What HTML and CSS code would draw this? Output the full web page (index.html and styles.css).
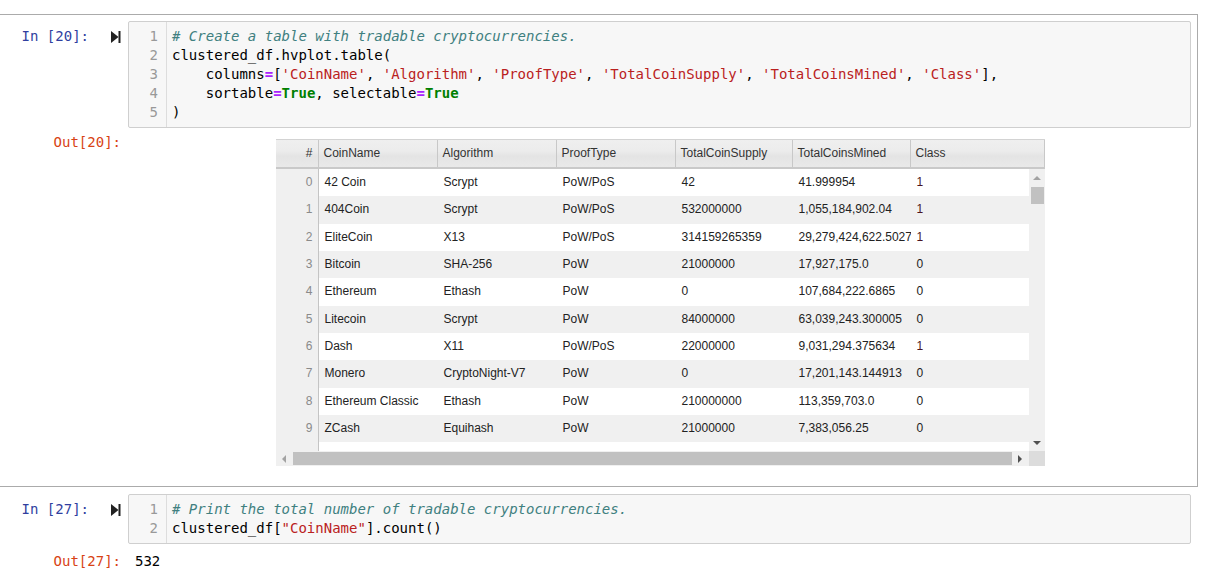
FILE: index.html
```html
<!DOCTYPE html>
<html>
<head>
<meta charset="utf-8">
<link rel="stylesheet" href="styles.css">
</head>
<body>
<div class="notebook">
  <div class="cell selected">
    <div class="input">
      <div class="prompt in-prompt"><span>In&nbsp;[20]:</span>
        <svg class="run" width="10" height="12" viewBox="0 0 10 12"><polygon points="0,0 7.5,6 0,12" fill="#222"/><rect x="7.5" y="0" width="2" height="12" fill="#222"/></svg>
      </div>
      <div class="code">
        <div class="gutter"><div>1</div><div>2</div><div>3</div><div>4</div><div>5</div></div>
        <div class="lines">
          <div class="ln"><span class="c"># Create a table with tradable cryptocurrencies.</span></div>
          <div class="ln">clustered_df.hvplot.table(</div>
          <div class="ln">    columns<span class="o">=</span>[<span class="s">'CoinName'</span>, <span class="s">'Algorithm'</span>, <span class="s">'ProofType'</span>, <span class="s">'TotalCoinSupply'</span>, <span class="s">'TotalCoinsMined'</span>, <span class="s">'Class'</span>],</div>
          <div class="ln">    sortable<span class="o">=</span><span class="k">True</span>, selectable<span class="o">=</span><span class="k">True</span></div>
          <div class="ln">)</div>
        </div>
      </div>
    </div>
    <div class="output output-table">
      <div class="prompt out-prompt">Out[20]:</div>
      <div class="out-area">
        <div class="grid">
          <div class="grid-header">
            <div class="hc idx">#</div>
            <div class="hc c1">CoinName</div>
            <div class="hc c2">Algorithm</div>
            <div class="hc c3">ProofType</div>
            <div class="hc c4">TotalCoinSupply</div>
            <div class="hc c5">TotalCoinsMined</div>
            <div class="hc c6 last">Class</div>
          </div>
          <div class="grid-body">
            <div class="viewport">
              <div class="row"><div class="dc idx">0</div><div class="dc c1">42 Coin</div><div class="dc c2">Scrypt</div><div class="dc c3">PoW/PoS</div><div class="dc c4">42</div><div class="dc c5">41.999954</div><div class="dc c6 one">1</div></div>
              <div class="row"><div class="dc idx">1</div><div class="dc c1">404Coin</div><div class="dc c2">Scrypt</div><div class="dc c3">PoW/PoS</div><div class="dc c4">532000000</div><div class="dc c5">1,055,184,902.04</div><div class="dc c6 one">1</div></div>
              <div class="row"><div class="dc idx">2</div><div class="dc c1">EliteCoin</div><div class="dc c2">X13</div><div class="dc c3">PoW/PoS</div><div class="dc c4">314159265359</div><div class="dc c5">29,279,424,622.502718</div><div class="dc c6 one">1</div></div>
              <div class="row"><div class="dc idx">3</div><div class="dc c1">Bitcoin</div><div class="dc c2">SHA-256</div><div class="dc c3">PoW</div><div class="dc c4">21000000</div><div class="dc c5">17,927,175.0</div><div class="dc c6">0</div></div>
              <div class="row"><div class="dc idx">4</div><div class="dc c1">Ethereum</div><div class="dc c2">Ethash</div><div class="dc c3">PoW</div><div class="dc c4">0</div><div class="dc c5">107,684,222.6865</div><div class="dc c6">0</div></div>
              <div class="row"><div class="dc idx">5</div><div class="dc c1">Litecoin</div><div class="dc c2">Scrypt</div><div class="dc c3">PoW</div><div class="dc c4">84000000</div><div class="dc c5">63,039,243.300005</div><div class="dc c6">0</div></div>
              <div class="row"><div class="dc idx">6</div><div class="dc c1">Dash</div><div class="dc c2">X11</div><div class="dc c3">PoW/PoS</div><div class="dc c4">22000000</div><div class="dc c5">9,031,294.375634</div><div class="dc c6 one">1</div></div>
              <div class="row"><div class="dc idx">7</div><div class="dc c1">Monero</div><div class="dc c2">CryptoNight-V7</div><div class="dc c3">PoW</div><div class="dc c4">0</div><div class="dc c5">17,201,143.144913</div><div class="dc c6">0</div></div>
              <div class="row"><div class="dc idx">8</div><div class="dc c1">Ethereum Classic</div><div class="dc c2">Ethash</div><div class="dc c3">PoW</div><div class="dc c4">210000000</div><div class="dc c5">113,359,703.0</div><div class="dc c6">0</div></div>
              <div class="row"><div class="dc idx">9</div><div class="dc c1">ZCash</div><div class="dc c2">Equihash</div><div class="dc c3">PoW</div><div class="dc c4">21000000</div><div class="dc c5">7,383,056.25</div><div class="dc c6">0</div></div>
              <div class="row"><div class="dc idx"></div><div class="dc c1"></div><div class="dc c2"></div><div class="dc c3"></div><div class="dc c4"></div><div class="dc c5"></div><div class="dc c6"></div></div>
            </div>
            <div class="vscroll">
              <div class="sbtn"><span class="tri up dim"></span></div>
              <div class="vthumb"></div>
              <div class="spacer"></div>
              <div class="sbtn"><span class="tri down"></span></div>
            </div>
          </div>
          <div class="hscroll">
            <div class="hbtn"><span class="tri left dim"></span></div>
            <div class="hthumb"></div>
            <div class="hbtn"><span class="tri right"></span></div>
            <div class="corner"></div>
          </div>
        </div>
      </div>
    </div>
  </div>

  <div class="cell">
    <div class="input">
      <div class="prompt in-prompt"><span>In&nbsp;[27]:</span>
        <svg class="run" width="10" height="12" viewBox="0 0 10 12"><polygon points="0,0 7.5,6 0,12" fill="#222"/><rect x="7.5" y="0" width="2" height="12" fill="#222"/></svg>
      </div>
      <div class="code">
        <div class="gutter"><div>1</div><div>2</div></div>
        <div class="lines">
          <div class="ln"><span class="c"># Print the total number of tradable cryptocurrencies.</span></div>
          <div class="ln">clustered_df[<span class="s">"CoinName"</span>].count()</div>
        </div>
      </div>
    </div>
    <div class="output output-text">
      <div class="prompt out-prompt">Out[27]:</div>
      <div class="out-text">532</div>
    </div>
  </div>
</div>
</body>
</html>
```

FILE: styles.css
```css
* { box-sizing: border-box; }
html, body { margin: 0; padding: 0; background: #fff; }
body {
  font-family: "DejaVu Sans Mono", "Liberation Mono", monospace;
  font-size: 14px;
  color: #000;
  width: 1212px;
  height: 581px;
  overflow: hidden;
}
.notebook { padding-top: 14px; }

.cell {
  width: 1198px;
  border: 1px solid transparent;
  border-left: none;
  padding: 6px 6px 6px 0;
}
.cell.selected {
  border-color: #ababab;
  padding-bottom: 20px;
}

.input { display: flex; align-items: flex-start; }

.prompt {
  width: 128px;
  flex: 0 0 128px;
  line-height: 19px;
  padding-right: 7px;
  text-align: right;
  white-space: nowrap;
}
.in-prompt {
  color: #303f9f;
  padding-top: 6px;
  display: flex;
  align-items: center;
  justify-content: flex-end;
}
.in-prompt .run { margin-left: 22px; margin-top: 1px; }
.out-prompt { color: #d84315; }

.code {
  flex: 1;
  display: flex;
  background: #f7f7f7;
  border: 1px solid #cfcfcf;
  border-radius: 2px;
  line-height: 19px;
}
.gutter {
  width: 38px;
  flex: 0 0 38px;
  border-right: 1px solid #dddddd;
  color: #999;
  text-align: right;
  padding: 5px 8px 5px 0;
}
.lines { padding: 5px 0 5px 5px; }
.ln { white-space: pre; }
.c { color: #408080; font-style: italic; }
.s { color: #ba2121; }
.o { color: #aa22ff; font-weight: bold; }
.k { color: #008000; font-weight: bold; }

.output { display: flex; align-items: flex-start; }
.output-table { padding-top: 5px; }
.out-area { flex: 1; display: flex; justify-content: center; padding-top: 6px; padding-left: 1px; }

.grid {
  width: 769px;
  font-family: "Liberation Sans", Arial, sans-serif;
  font-size: 12px;
  color: #222;
}
.grid-header {
  display: flex;
  height: 30px;
  border-top: 1px solid #d3d3d3;
  border-bottom: 2px solid #c9c9c9;
  background: linear-gradient(to bottom, #efefef 0%, #ececec 40%, #e4e4e4 60%, #e9e9e9 100%);
  color: #333;
}
.hc {
  line-height: 27px;
  border-right: 1px solid #c8c8c8;
  padding-left: 5px;
  white-space: nowrap;
  overflow: hidden;
}
.hc.idx { text-align: right; padding-left: 0; padding-right: 5px; }
.hc.last { flex: 1; }

.idx { width: 43px; flex: 0 0 43px; }
.c1 { width: 119px; flex: 0 0 119px; }
.c2 { width: 119px; flex: 0 0 119px; }
.c3 { width: 119px; flex: 0 0 119px; }
.c4 { width: 117px; flex: 0 0 117px; }
.c5 { width: 118px; flex: 0 0 118px; }
.c6 { width: 118px; flex: 0 0 118px; }
.hc.c6 { flex: 1; }

.grid-body { display: flex; height: 282px; }
.viewport { width: 753px; height: 282px; overflow: hidden; }
.row { display: flex; height: 27.35px; background: #fff; }
.row:nth-child(even) { background: #f0f0f0; }
.dc {
  line-height: 27px;
  padding-left: 6px;
  white-space: nowrap;
  overflow: hidden;
}
.dc.idx {
  background: #f0f0f0;
  color: #8a8a8a;
  text-align: right;
  padding-left: 0;
  padding-right: 5px;
  border-right: 1px solid #c4c4c4;
}
.dc.one { color: #4a1424; }

.vscroll {
  width: 16px;
  flex: 0 0 16px;
  background: #f0f0f0;
  display: flex;
  flex-direction: column;
}
.sbtn { height: 17px; display: flex; align-items: center; justify-content: center; }
.vthumb { height: 17px; margin: 1px 1px 0 2px; background: #c1c1c1; }
.spacer { flex: 1; }

.hscroll { display: flex; height: 15px; background: #f0f0f0; }
.hbtn { width: 17px; flex: 0 0 17px; display: flex; align-items: center; justify-content: center; }
.hthumb { width: 719px; flex: 0 0 719px; height: 13px; margin-top: 1px; background: #c1c1c1; }
.corner { flex: 1; background: #dcdcdc; }

.tri { width: 0; height: 0; border-style: solid; }
.tri.up { border-width: 0 4px 4px 4px; border-color: transparent transparent #505050 transparent; }
.tri.down { border-width: 4px 4px 0 4px; border-color: #505050 transparent transparent transparent; }
.tri.left { border-width: 4px 4px 4px 0; border-color: transparent #505050 transparent transparent; }
.tri.right { border-width: 4px 0 4px 4px; border-color: transparent transparent transparent #505050; }
.tri.up.dim { border-bottom-color: #a3a3a3; }
.tri.left.dim { border-right-color: #a3a3a3; }

.output-text { padding-top: 8px; }
.out-text { padding-left: 7px; line-height: 19px; color: #000; }
```
